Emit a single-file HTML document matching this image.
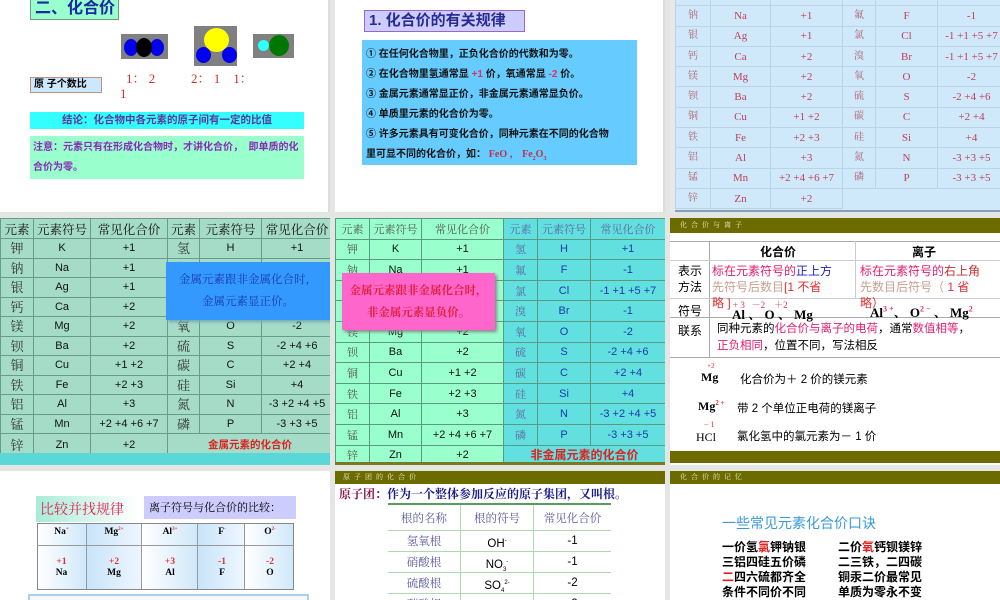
<!DOCTYPE html>
<html><head><meta charset="utf-8">
<style>
*{margin:0;padding:0;box-sizing:border-box}
body{width:1000px;height:600px;overflow:hidden;background:#e4e6e4;position:relative;font-family:"Liberation Sans","Noto Sans CJK SC",sans-serif}
.a{position:absolute}
.s{position:absolute;overflow:hidden}
.serif{font-family:"Liberation Serif","Noto Serif CJK SC",serif}
table{border-collapse:collapse;position:absolute;table-layout:fixed}
td{text-align:center;white-space:nowrap;padding:0;overflow:hidden;line-height:14px}
.t3 td{border:1px solid #b8d4e8;color:#c0405a;font-size:11px;font-family:"Liberation Serif","Noto Serif CJK SC",serif;height:20.3px}
.t3 td.c{color:#b06070;font-size:10px}
.t4 td{border:1px solid #6a9a88;font-size:11px;color:#111;height:19.5px}
.t4 td.c{font-family:"Noto Serif CJK SC",serif;font-size:13px;color:#333}
.t4 tr.h td{font-family:"Noto Serif CJK SC",serif;font-size:12.5px;height:20px}
.t5 td{border:1px solid #5a9a80;font-size:11px;color:#111;height:20.6px}
.t5 td.c{font-family:"Noto Serif CJK SC",serif;font-size:11px;color:#555}
.t5 td.r{background:#62e0e0;color:#1a3aa8}
.t5 td.rc{background:#62e0e0;color:#5a6aa0;font-family:"Noto Serif CJK SC",serif}
.line{font-size:10px;color:#111;font-weight:bold;height:20px;line-height:20px;white-space:nowrap}
</style></head><body>

<!-- Slide 1 -->
<div class="s" style="left:0;top:0;width:330px;height:212px;background:#fff;border-right:2px solid #ddd">
 <div class="a" style="left:30px;top:-2px;width:89px;height:22px;background:#99ffcc;border:1px solid #6a9a80;color:#1a2aa0;font-weight:bold;font-size:16px;line-height:20px;padding-left:4px">二、化合价</div>
 <div class="a" style="left:121px;top:34px;width:47px;height:25px;background:#808080"></div>
 <div class="a" style="left:124px;top:39px;width:14px;height:17px;border-radius:50%;background:#0000ee"></div>
 <div class="a" style="left:150px;top:39px;width:14px;height:17px;border-radius:50%;background:#0000ee"></div>
 <div class="a" style="left:136px;top:38px;width:16px;height:19px;border-radius:50%;background:#000"></div>
 <div class="a" style="left:194px;top:26px;width:43px;height:40px;background:#808080"></div>
 <div class="a" style="left:204px;top:28px;width:25px;height:24px;border-radius:50%;background:#ffff00"></div>
 <div class="a" style="left:196px;top:47px;width:15px;height:16px;border-radius:50%;background:#0000ee"></div>
 <div class="a" style="left:222px;top:47px;width:15px;height:16px;border-radius:50%;background:#0000ee"></div>
 <div class="a" style="left:253px;top:34px;width:41px;height:24px;background:#808080"></div>
 <div class="a" style="left:258px;top:40px;width:11px;height:11px;border-radius:50%;background:#33ffff"></div>
 <div class="a" style="left:269px;top:35px;width:20px;height:21px;border-radius:50%;background:#007700"></div>
 <div class="a serif" style="left:126px;top:68px;color:#d03030;font-size:13px;white-space:nowrap">1： 2&nbsp;&nbsp;&nbsp;&nbsp;&nbsp;&nbsp;&nbsp;&nbsp;&nbsp;&nbsp;&nbsp;2： 1&nbsp;&nbsp;&nbsp;&nbsp;1：</div>
 <div class="a serif" style="left:120px;top:86px;color:#d03030;font-size:13px">1</div>
 <div class="a" style="left:30px;top:77px;width:72px;height:16px;background:#cce8ff;border:1px solid #c09080;font-size:10px;font-weight:bold;line-height:14px;padding-left:3px">原 子个数比</div>
 <div class="a" style="left:30px;top:112px;width:274px;height:17px;background:#33ffff;font-size:10.5px;font-weight:bold;color:#5a3aa0;text-align:center;line-height:17px">结论：化合物中各元素的原子间有一定的比值</div>
 <div class="a" style="left:30px;top:136px;width:274px;height:43px;background:#99ffcc;font-size:10px;font-weight:bold;color:#8a2ab8;line-height:20px;padding:2px 3px">注意：元素只有在形成化合物时，才讲化合价，&nbsp;&nbsp;即单质的化合价为零。</div>
</div>

<!-- Slide 2 -->
<div class="s" style="left:335px;top:0;width:330px;height:212px;background:#fff;border-right:2px solid #ddd">
 <div class="a" style="left:29px;top:10px;width:161px;height:22px;background:#ccccff;border:1px solid #9966cc;color:#2a2a90;font-size:15px;font-weight:bold;line-height:20px;padding-left:4px">1. 化合价的有关规律</div>
 <div class="a" style="left:27px;top:40px;width:275px;height:125px;background:#66ccff;padding:5px 4px">
  <div class="line">① 在任何化合物里，正负化合价的代数和为零。</div>
  <div class="line">② 在化合物里氢通常显 <span style="color:#e03060">+1</span> 价，氧通常显 <span style="color:#e03060">-2</span> 价。</div>
  <div class="line">③ 金属元素通常显正价，非金属元素通常显负价。</div>
  <div class="line">④ 单质里元素的化合价为零。</div>
  <div class="line">⑤ 许多元素具有可变化合价，同种元素在不同的化合物</div>
  <div class="line">里可显不同的化合价，如： <span style="color:#c03050" class="serif">FeO ， Fe<sub style="font-size:6px">2</sub>O<sub style="font-size:6px">3</sub></span></div>
 </div>
</div>

<!-- Slide 3 -->
<div class="s" style="left:670px;top:0;width:330px;height:212px;background:#cfe9fb;border-left:5px solid #e8e8e8">
 <table class="t3" style="left:0;top:-15px;width:330px">
  <colgroup><col style="width:35px"><col style="width:60px"><col style="width:72px"><col style="width:33px"><col style="width:62px"><col style="width:68px"></colgroup>
  <tr><td class="c"></td><td></td><td></td><td class="c"></td><td></td><td></td></tr>
  <tr><td class="c">钠</td><td>Na</td><td>+1</td><td class="c">氟</td><td>F</td><td>-1</td></tr>
  <tr><td class="c">银</td><td>Ag</td><td>+1</td><td class="c">氯</td><td>Cl</td><td>-1 +1 +5 +7</td></tr>
  <tr><td class="c">钙</td><td>Ca</td><td>+2</td><td class="c">溴</td><td>Br</td><td>-1 +1 +5 +7</td></tr>
  <tr><td class="c">镁</td><td>Mg</td><td>+2</td><td class="c">氧</td><td>O</td><td>-2</td></tr>
  <tr><td class="c">钡</td><td>Ba</td><td>+2</td><td class="c">硫</td><td>S</td><td>-2 +4 +6</td></tr>
  <tr><td class="c">铜</td><td>Cu</td><td>+1 +2</td><td class="c">碳</td><td>C</td><td>+2 +4</td></tr>
  <tr><td class="c">铁</td><td>Fe</td><td>+2 +3</td><td class="c">硅</td><td>Si</td><td>+4</td></tr>
  <tr><td class="c">铝</td><td>Al</td><td>+3</td><td class="c">氮</td><td>N</td><td>-3 +3 +5</td></tr>
  <tr><td class="c">锰</td><td>Mn</td><td>+2 +4 +6 +7</td><td class="c">磷</td><td>P</td><td>-3 +3 +5</td></tr>
  <tr><td class="c">锌</td><td>Zn</td><td>+2</td><td style="border:none"></td><td style="border:none"></td><td style="border:none"></td></tr>
 </table>
 <div class="a" style="left:0;top:210px;width:330px;height:2px;background:#8aa0b0"></div>
</div>

<!-- Slide 4 -->
<div class="s" style="left:0;top:218px;width:330px;height:247px;background:#a4dcc8">
 <table class="t4" style="left:0;top:0;width:332px">
  <colgroup><col style="width:33px"><col style="width:57px"><col style="width:77px"><col style="width:32px"><col style="width:62px"><col style="width:71px"></colgroup>
  <tr class="h"><td>元素</td><td>元素符号</td><td>常见化合价</td><td>元素</td><td>元素符号</td><td>常见化合价</td></tr>
  <tr><td class="c">钾</td><td>K</td><td>+1</td><td class="c">氢</td><td>H</td><td>+1</td></tr>
  <tr><td class="c">钠</td><td>Na</td><td>+1</td><td class="c">氟</td><td>F</td><td>-1</td></tr>
  <tr><td class="c">银</td><td>Ag</td><td>+1</td><td class="c">氯</td><td>Cl</td><td>-1</td></tr>
  <tr><td class="c">钙</td><td>Ca</td><td>+2</td><td class="c">溴</td><td>Br</td><td>-1</td></tr>
  <tr><td class="c">镁</td><td>Mg</td><td>+2</td><td class="c">氧</td><td>O</td><td>-2</td></tr>
  <tr><td class="c">钡</td><td>Ba</td><td>+2</td><td class="c">硫</td><td>S</td><td>-2 +4 +6</td></tr>
  <tr><td class="c">铜</td><td>Cu</td><td>+1 +2</td><td class="c">碳</td><td>C</td><td>+2 +4</td></tr>
  <tr><td class="c">铁</td><td>Fe</td><td>+2 +3</td><td class="c">硅</td><td>Si</td><td>+4</td></tr>
  <tr><td class="c">铝</td><td>Al</td><td>+3</td><td class="c">氮</td><td>N</td><td>-3 +2 +4 +5</td></tr>
  <tr><td class="c">锰</td><td>Mn</td><td>+2 +4 +6 +7</td><td class="c">磷</td><td>P</td><td>-3 +3 +5</td></tr>
  <tr><td class="c" style="height:22px">锌</td><td>Zn</td><td>+2</td><td colspan="3" style="color:#e02020;font-weight:bold;font-size:10.5px">金属元素的化合价</td></tr>
 </table>
 <div class="a" style="left:0;top:235px;width:330px;height:12px;background:#5ad8d8"></div>
 <div class="a" style="left:166px;top:44px;width:164px;height:58px;background:#3399ff;box-shadow:2px 2px 3px #7aa;color:#1a3ab0;font-family:'Noto Serif CJK SC',serif;font-size:11.5px;text-align:center;line-height:22px;padding-top:6px">金属元素跟非金属化合时，<br>金属元素显正价。</div>
</div>

<!-- Slide 5 -->
<div class="s" style="left:335px;top:218px;width:330px;height:247px;background:#99ffcc">
 <table class="t5" style="left:0;top:0;width:330px">
  <colgroup><col style="width:34px"><col style="width:52px"><col style="width:82px"><col style="width:34px"><col style="width:53px"><col style="width:75px"></colgroup>
  <tr><td class="c">元素</td><td class="c">元素符号</td><td class="c">常见化合价</td><td class="rc">元素</td><td class="rc">元素符号</td><td class="rc">常见化合价</td></tr>
  <tr><td class="c">钾</td><td>K</td><td>+1</td><td class="rc">氢</td><td class="r">H</td><td class="r">+1</td></tr>
  <tr><td class="c">钠</td><td>Na</td><td>+1</td><td class="rc">氟</td><td class="r">F</td><td class="r">-1</td></tr>
  <tr><td class="c">银</td><td>Ag</td><td>+1</td><td class="rc">氯</td><td class="r">Cl</td><td class="r">-1 +1 +5 +7</td></tr>
  <tr><td class="c">钙</td><td>Ca</td><td>+2</td><td class="rc">溴</td><td class="r">Br</td><td class="r">-1</td></tr>
  <tr><td class="c">镁</td><td>Mg</td><td>+2</td><td class="rc">氧</td><td class="r">O</td><td class="r">-2</td></tr>
  <tr><td class="c">钡</td><td>Ba</td><td>+2</td><td class="rc">硫</td><td class="r">S</td><td class="r">-2 +4 +6</td></tr>
  <tr><td class="c">铜</td><td>Cu</td><td>+1 +2</td><td class="rc">碳</td><td class="r">C</td><td class="r">+2 +4</td></tr>
  <tr><td class="c">铁</td><td>Fe</td><td>+2 +3</td><td class="rc">硅</td><td class="r">Si</td><td class="r">+4</td></tr>
  <tr><td class="c">铝</td><td>Al</td><td>+3</td><td class="rc">氮</td><td class="r">N</td><td class="r">-3 +2 +4 +5</td></tr>
  <tr><td class="c">锰</td><td>Mn</td><td>+2 +4 +6 +7</td><td class="rc">磷</td><td class="r">P</td><td class="r">-3 +3 +5</td></tr>
  <tr><td class="c">锌</td><td>Zn</td><td>+2</td><td colspan="3" style="background:#62e0e0;color:#e02020;font-weight:bold;font-size:12px">非金属元素的化合价</td></tr>
 </table>
 <div class="a" style="left:0;top:244px;width:330px;height:3px;background:#7a7a20"></div>
 <div class="a" style="left:7px;top:55px;width:153px;height:57px;background:#ff66cc;box-shadow:2px 2px 3px #888;color:#e02040;font-family:'Noto Serif CJK SC',serif;font-weight:bold;font-size:11.5px;text-align:center;line-height:22px;padding-top:6px">金属元素跟非金属化合时，<br>非金属元素显负价。</div>
</div>

<!-- Slide 6 -->
<div class="s" style="left:670px;top:218px;width:330px;height:247px;background:#fff">
 <div class="a" style="left:0;top:0;width:330px;height:15px;background:#6b6b00;color:#e8e8c0;font-size:7px;line-height:15px;padding-left:10px;letter-spacing:4px;font-family:'Noto Serif CJK SC',serif">化合价与离子</div>
 <div class="a" style="left:0;top:23px;width:330px;height:117px;border-top:1px solid #aaa;border-bottom:1px solid #aaa"></div>
 <div class="a" style="left:39px;top:23px;width:1px;height:117px;background:#aaa"></div>
 <div class="a" style="left:185px;top:23px;width:1px;height:57px;background:#ccc"></div>
 <div class="a" style="left:0;top:42px;width:330px;height:1px;background:#ccc"></div>
 <div class="a" style="left:0;top:99px;width:330px;height:1px;background:#aaa"></div>
 <div class="a" style="left:0;top:80px;width:330px;height:1px;background:#ccc"></div>
 <div class="a" style="left:90px;top:25px;font-size:12px;font-weight:bold">化合价</div>
 <div class="a" style="left:242px;top:25px;font-size:12px;font-weight:bold">离子</div>
 <div class="a" style="left:8px;top:45px;font-size:12px;line-height:16px">表示<br>方法</div>
 <div class="a" style="left:8px;top:84px;font-size:12px">符号</div>
 <div class="a" style="left:8px;top:104px;font-size:12px">联系</div>
 <div class="a" style="left:42px;top:45px;font-size:12px;line-height:16px;white-space:nowrap"><span style="color:#e02070">标在元素符号的</span><span style="color:#2020c0">正上方</span><br><span style="color:#c8a090">先符号后数目</span><span style="color:#e03030">[1 不省</span><br><span style="color:#e03030">略 ]</span></div>
 <div class="a" style="left:190px;top:45px;font-size:12px;line-height:16px;white-space:nowrap"><span style="color:#e02070">标在元素符号的</span><span style="color:#c03030">右上角</span><br><span style="color:#c8a090">先数目后符号（</span><span style="color:#e03030"> 1 省</span><br><span style="color:#e03030">略）</span></div>
 <div class="a serif" style="left:63px;top:80px;font-size:9px;color:#e03060;white-space:nowrap">+ 3&nbsp;&nbsp;&nbsp;－2&nbsp;&nbsp;&nbsp;&nbsp;＋2</div>
 <div class="a serif" style="left:62px;top:86px;font-size:13px;font-weight:bold;white-space:nowrap">Al 、 O 、 Mg</div>
 <div class="a serif" style="left:200px;top:84px;font-size:13px;font-weight:bold;white-space:nowrap">Al<sup style="color:#e03060;font-size:8px">3 +</sup>、 O<sup style="color:#e03060;font-size:8px">2 −</sup> 、 Mg<sup style="color:#e03060;font-size:8px">2</sup></div>
 <div class="a" style="left:47px;top:103px;font-size:11.5px;line-height:17px;white-space:nowrap">同种元素的<span style="color:#e02070">化合价与离子的电荷</span>，通常<span style="color:#e02070">数值相等</span>，<br><span style="color:#e02070">正负相同</span>，位置不同，写法相反</div>
 <div class="a serif" style="left:37px;top:144px;font-size:7px;color:#e03030">+2</div>
 <div class="a serif" style="left:31px;top:152px;font-size:12px;font-weight:bold">Mg</div>
 <div class="a" style="left:70px;top:153px;font-size:11.5px">化合价为＋ 2 价的镁元素</div>
 <div class="a serif" style="left:28px;top:181px;font-size:12px;font-weight:bold">Mg<sup style="color:#e03030;font-size:7px">2 +</sup></div>
 <div class="a" style="left:67px;top:182px;font-size:11.5px">带 2 个单位正电荷的镁离子</div>
 <div class="a serif" style="left:34px;top:202px;font-size:8px;color:#e03030">− 1</div>
 <div class="a serif" style="left:26px;top:212px;font-size:12px">HCl</div>
 <div class="a" style="left:67px;top:210px;font-size:11.5px">氯化氢中的氯元素为－ 1 价</div>
 <div class="a" style="left:0;top:233px;width:330px;height:12px;background:#6b6b00"></div>
</div>

<!-- Slide 7 -->
<div class="s" style="left:0;top:471px;width:330px;height:129px;background:#fff">
 <div class="a" style="left:36px;top:25px;width:102px;height:26px;background:linear-gradient(90deg,#a8ecd8,#fff);color:#e02050;font-family:'Noto Serif CJK SC',serif;font-size:14px;line-height:26px;padding-left:4px">比较并找规律</div>
 <div class="a" style="left:144px;top:25px;width:152px;height:23px;background:#ccccff;font-family:'Noto Serif CJK SC',serif;font-size:11px;line-height:23px;padding-left:5px">离子符号与化合价的比较：</div>
 <div class="a" style="left:37px;top:52px;width:257px;height:67px;border:1px solid #888;background:#fff"></div>
 <div class="a" style="left:37px;top:52px;width:257px;height:67px;display:flex;border:1px solid #888">
  <div style="width:49px;background:linear-gradient(90deg,#fff,#d0e8fa);border-right:1px solid #999"></div>
  <div style="width:56px;background:linear-gradient(90deg,#c8e4fa,#eef6ff);border-right:1px solid #999"></div>
  <div style="width:56px;background:linear-gradient(90deg,#fff,#d0e8fa);border-right:1px solid #999"></div>
  <div style="width:48px;background:linear-gradient(90deg,#c8e4fa,#eef6ff);border-right:1px solid #999"></div>
  <div style="width:48px;background:linear-gradient(90deg,#fff,#d0e8fa)"></div>
 </div>
 <div class="a" style="left:37px;top:74px;width:257px;height:1px;background:#999"></div>
 <div class="a serif" style="left:37px;top:56px;width:257px;display:flex;font-size:9.5px;font-weight:bold;text-align:center">
  <div style="width:49px">Na<sup style="color:#e03030;font-size:5px">+</sup></div><div style="width:56px">Mg<sup style="color:#e03030;font-size:5px">2+</sup></div><div style="width:56px">Al<sup style="color:#e03030;font-size:5px">3+</sup></div><div style="width:48px">F<sup style="color:#e03030;font-size:5px">-</sup></div><div style="width:48px">O<sup style="color:#e03030;font-size:5px">2-</sup></div>
 </div>
 <div class="a serif" style="left:37px;top:86px;width:257px;display:flex;font-size:9.5px;font-weight:bold;text-align:center;line-height:11px">
  <div style="width:49px"><span style="color:#e03030">+1</span><br>Na</div><div style="width:56px"><span style="color:#e03030">+2</span><br>Mg</div><div style="width:56px"><span style="color:#e03030">+3</span><br>Al</div><div style="width:48px"><span style="color:#e03030">-1</span><br>F</div><div style="width:48px"><span style="color:#e03030">-2</span><br>O</div>
 </div>
 <div class="a" style="left:28px;top:123px;width:281px;height:10px;border:2px solid #a8d0f0;background:#f4f8ff"></div>
</div>

<!-- Slide 8 -->
<div class="s" style="left:335px;top:471px;width:330px;height:129px;background:#fff">
 <div class="a" style="left:0;top:0;width:330px;height:13px;background:#6b6b00;color:#e8e8c0;font-size:7px;line-height:13px;padding-left:8px;letter-spacing:4px;font-family:'Noto Serif CJK SC',serif">原子团的化合价</div>
 <div class="a" style="left:4px;top:14px;font-size:12px;font-weight:bold;white-space:nowrap;font-family:'Noto Serif CJK SC',serif"><span style="color:#8a1a4a">原子团：</span><span style="color:#1a1a8a">作为一个整体参加反应的原子集团，又叫根。</span></div>
 <div class="a" style="left:53px;top:32px;width:223px;height:2px;background:#5a9a5a"></div>
 <div class="a" style="left:53px;top:34px;width:223px;height:100px;font-family:'Noto Serif CJK SC',serif;font-size:11.5px">
  <div style="display:flex;height:26px;line-height:26px;border-bottom:1px solid #b0d8b0;color:#5a5aa0"><div style="width:73px;text-align:center;border-right:1px solid #b0d8b0">根的名称</div><div style="width:73px;text-align:center;border-right:1px solid #b0d8b0">根的符号</div><div style="width:77px;text-align:center">常见化合价</div></div>
  <div style="display:flex;height:21px;line-height:21px;border-bottom:1px solid #b0d8b0"><div style="width:73px;text-align:center;border-right:1px solid #b0d8b0;color:#5a5aa0">氢氧根</div><div style="width:73px;text-align:center;border-right:1px solid #b0d8b0;font-family:'Liberation Sans'">OH<sup style="font-size:6px">-</sup></div><div style="width:77px;text-align:center;font-family:'Liberation Sans'">-1</div></div>
  <div style="display:flex;height:21px;line-height:21px;border-bottom:1px solid #b0d8b0"><div style="width:73px;text-align:center;border-right:1px solid #b0d8b0;color:#5a5aa0">硝酸根</div><div style="width:73px;text-align:center;border-right:1px solid #b0d8b0;font-family:'Liberation Sans'">NO<sub style="font-size:6px">3</sub><sup style="font-size:6px">-</sup></div><div style="width:77px;text-align:center;font-family:'Liberation Sans'">-1</div></div>
  <div style="display:flex;height:21px;line-height:21px;border-bottom:1px solid #b0d8b0"><div style="width:73px;text-align:center;border-right:1px solid #b0d8b0;color:#5a5aa0">硫酸根</div><div style="width:73px;text-align:center;border-right:1px solid #b0d8b0;font-family:'Liberation Sans'">SO<sub style="font-size:6px">4</sub><sup style="font-size:6px">2-</sup></div><div style="width:77px;text-align:center;font-family:'Liberation Sans'">-2</div></div>
  <div style="display:flex;height:21px;line-height:21px"><div style="width:73px;text-align:center;border-right:1px solid #b0d8b0;color:#5a5aa0">碳酸根</div><div style="width:73px;text-align:center;border-right:1px solid #b0d8b0;font-family:'Liberation Sans'">CO<sub style="font-size:6px">3</sub><sup style="font-size:6px">2-</sup></div><div style="width:77px;text-align:center;font-family:'Liberation Sans'">-2</div></div>
 </div>
</div>

<!-- Slide 9 -->
<div class="s" style="left:670px;top:471px;width:330px;height:129px;background:#fff">
 <div class="a" style="left:0;top:0;width:330px;height:13px;background:#6b6b00;color:#e8e8c0;font-size:7px;line-height:13px;padding-left:10px;letter-spacing:4px;font-family:'Noto Serif CJK SC',serif">化合价的记忆</div>
 <div class="a" style="left:52px;top:42px;font-size:14px;color:#3a9ad8">一些常见元素化合价口诀</div>
 <div class="a" style="left:52px;top:69px;font-size:12px;font-weight:bold;line-height:15px;white-space:nowrap">一价氢<span style="color:#e02020">氯</span>钾钠银<br>三铝四硅五价磷<br><span style="color:#e02020">二</span>四六硫都齐全<br>条件不同价不同</div>
 <div class="a" style="left:168px;top:69px;font-size:12px;font-weight:bold;line-height:15px;white-space:nowrap">二价<span style="color:#e02020">氧</span>钙钡镁锌<br>二三铁，二四碳<br>铜汞二价最常见<br>单质为零永不变</div>
</div>
</body></html>
